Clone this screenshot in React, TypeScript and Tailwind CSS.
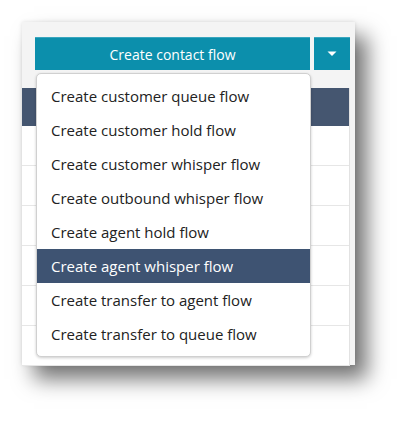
import React from "react";

const items = [
  "Create customer queue flow",
  "Create customer hold flow",
  "Create customer whisper flow",
  "Create outbound whisper flow",
  "Create agent hold flow",
  "Create agent whisper flow",
  "Create transfer to agent flow",
  "Create transfer to queue flow",
];

export default function App() {
  return (
    <div
      className="w-[411px] h-[421px] bg-white pl-[22px] pt-[22px]"
      style={{ fontFamily: '"Open Sans", "Noto Sans", sans-serif' }}
    >
      <div className="relative w-[333px] h-[343px] bg-[#f4f4f4] shadow-[12px_14px_20px_rgba(0,0,0,0.55),0_0_4px_rgba(0,0,0,0.12)]">
        <div className="flex gap-[4px] pl-[13px] pt-[15px]">
          <button className="w-[275px] h-[33px] bg-[#0c8fac] border-t border-[#3aa6be] text-white text-[14px] flex items-center justify-center">
            Create contact flow
          </button>
          <button className="w-[36px] h-[33px] bg-[#0c8fac] border-t border-[#3aa6be] flex items-center justify-center">
            <svg width="10" height="6" viewBox="0 0 10 6">
              <polygon points="0.5,0.5 9.5,0.5 5,5" fill="white" />
            </svg>
          </button>
        </div>
        <div className="mt-[18px] w-[328px] bg-white border-r border-[#e2e2e2]">
          <div className="h-[38px] bg-[#455670]" />
          {[0, 1, 2, 3, 4, 5].map((i) => (
            <div key={i} className="h-[40px] border-b border-[#e6e6e6]" />
          ))}
        </div>
        <div className="absolute left-[14px] top-[51px] w-[275px] h-[284px] bg-white rounded-[5px] border border-[#d0d0d0] shadow-[0_1px_3px_rgba(0,0,0,0.2)] py-[5px]">
          {items.map((t, i) => (
            <div
              key={t}
              className={
                i === 5
                  ? "h-[34px] flex items-center pl-[14px] text-[15px] bg-[#3e5372] text-white"
                  : "h-[34px] flex items-center pl-[14px] text-[15px] text-[#222222]"
              }
            >
              {t}
            </div>
          ))}
        </div>
      </div>
    </div>
  );
}
